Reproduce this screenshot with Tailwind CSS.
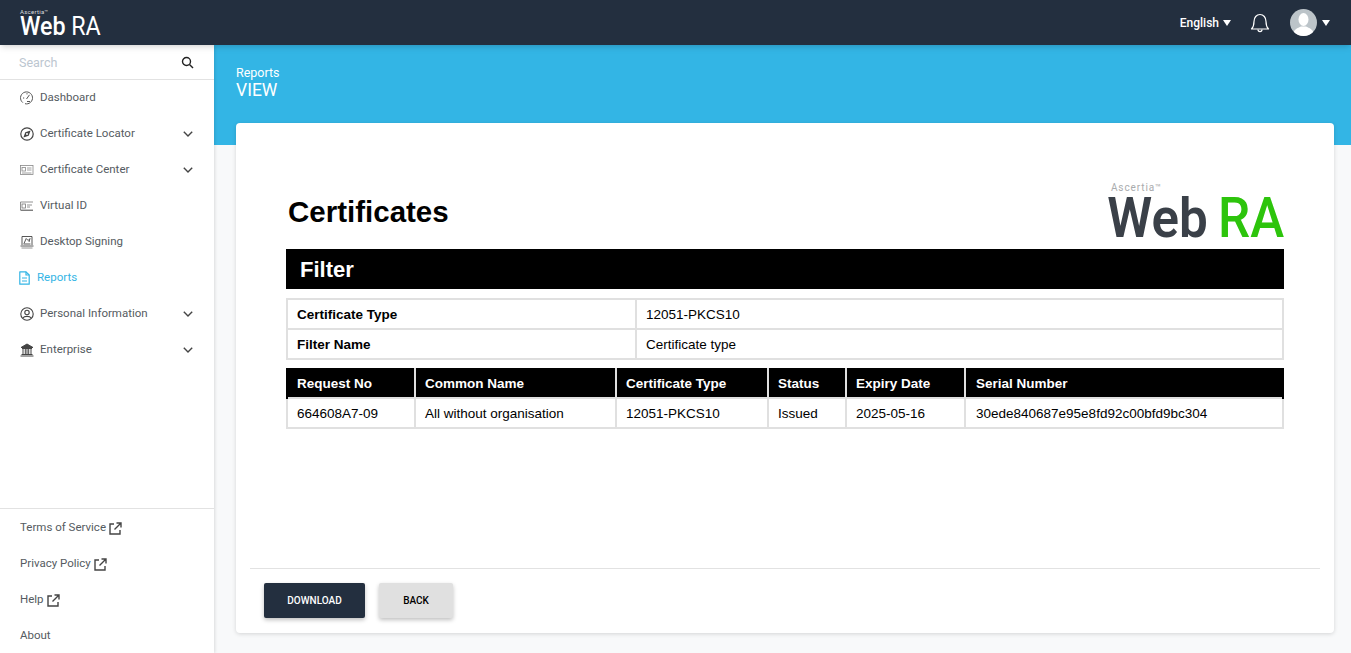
<!DOCTYPE html>
<html lang="en">

<head>
    <meta charset="UTF-8">
    <meta name="viewport" content="width=device-width, initial-scale=1.0">
    <title>Reports - WebRA</title>
    <script src="https://cdn.jsdelivr.net/npm/@tailwindcss/browser@4"></script>
</head>

<body class="h-[653px] w-[1351px] overflow-hidden bg-[#f8f9fa] font-['Roboto',sans-serif]">
    <!-- top bar -->
    <header class="relative z-20 flex h-[45px] items-center justify-between bg-[#232f3f] shadow-md">
        <div class="mt-[-1px] ml-[20px] flex flex-col text-white">
            <span class="text-[6px] leading-[6px] tracking-[0.3px] text-[#d8dadd]">Ascertia™</span>
            <span class="mt-[2px] flex h-[19px] origin-left scale-x-[0.93] text-[25px] leading-[19px] font-medium"><span>Web</span><span class="ml-[6px] font-normal">RA</span></span>
        </div>
        <div class="flex items-center">
            <span class="ml-[1px] text-[12px] font-medium text-white">English</span>
            <span class="ml-[4px] h-0 w-0 border-x-[4px] border-t-[6px] border-x-transparent border-t-white"></span>
            <svg class="ml-[19px]" width="20" height="20" viewBox="0 0 20 20" fill="none" stroke="white" stroke-width="1.2">
                <path d="M1.5 16 C3.5 14 4 12.5 4 8.5 C4 4.5 6.5 1.5 10 1.5 C13.5 1.5 16 4.5 16 8.5 C16 12.5 16.5 14 18.5 16 Z" stroke-linejoin="round" />
                <path d="M8 16.5 C8 19.2 12 19.2 12 16.5" />
            </svg>
            <span class="ml-[20px] h-[27px] w-[27px] overflow-hidden rounded-full bg-[#bcc4c9]">
                <svg width="27" height="27" viewBox="0 0 27 27" fill="white">
                    <ellipse cx="13.5" cy="10.5" rx="5" ry="6.5" />
                    <path d="M3 27 C3 20 8 19 11 17.5 H16 C19 19 24 20 24 27 Z" />
                </svg>
            </span>
            <span class="mr-[21px] ml-[5px] h-0 w-0 border-x-[4px] border-t-[6px] border-x-transparent border-t-white"></span>
        </div>
    </header>

    <div class="flex h-[608px]">
        <!-- sidebar -->
        <aside class="relative z-10 flex w-[214px] shrink-0 flex-col bg-white text-[11.5px] text-[#555b61] shadow-[1px_0_3px_rgba(0,0,0,0.12)]">
            <div class="flex h-[35px] shrink-0 items-center justify-between border-b border-[#e2e2e2] pr-[20px] pl-[19px]">
                <span class="pt-[2px] text-[12.5px] text-[#bcc6d0]">Search</span>
                <svg width="13" height="13" viewBox="0 0 13 13" fill="none" stroke="#222" stroke-width="1.4">
                    <circle cx="5.5" cy="5.5" r="4" />
                    <path d="M8.5 8.5 L12 12" />
                </svg>
            </div>
            <nav class="flex flex-1 flex-col">
                <a class="flex h-[36px] items-center pl-[20px]">
                    <svg class="mr-[6px]" width="14" height="14" viewBox="0 0 14 14" fill="none" stroke="#555" stroke-width="1">
                        <path d="M2.8 11.6 A6 6 0 1 1 5 12.7" />
                        <path d="M6.5 8 L9.5 3.8 M3 7 H4.2 M7 2.2 V3.4 M10 10.5 H7" />
                    </svg>
                    Dashboard
                </a>
                <a class="flex h-[36px] items-center pl-[20px]">
                    <svg class="mr-[6px]" width="14" height="14" viewBox="0 0 14 14" fill="none" stroke="#444" stroke-width="1.2">
                        <circle cx="7" cy="7" r="6.2" />
                        <path fill-rule="evenodd" d="M10.6 3.4 L8.7 8.7 L3.4 10.6 L5.3 5.3 Z M7 6 A1 1 0 1 0 7 8 A1 1 0 1 0 7 6 Z" fill="#444" stroke="none" />
                    </svg>
                    Certificate Locator
                    <svg class="mr-[21px] ml-auto" width="10" height="6" viewBox="0 0 10 6" fill="none" stroke="#444" stroke-width="1.4"><path d="M0.8 0.8 L5 5 L9.2 0.8" /></svg>
                </a>
                <a class="flex h-[36px] items-center pl-[20px]">
                    <svg class="mr-[6px]" width="14" height="14" viewBox="0 0 14 14" fill="none" stroke="#888" stroke-width="0.8">
                        <rect x="0.5" y="2.5" width="12.5" height="9" />
                        <rect x="2" y="4.5" width="3.5" height="3.5" />
                        <path d="M7 5 H11.5 M7 7 H11.5 M2 10 H11.5" />
                    </svg>
                    Certificate Center
                    <svg class="mr-[21px] ml-auto" width="10" height="6" viewBox="0 0 10 6" fill="none" stroke="#444" stroke-width="1.4"><path d="M0.8 0.8 L5 5 L9.2 0.8" /></svg>
                </a>
                <a class="flex h-[36px] items-center pl-[20px]">
                    <svg class="mr-[6px]" width="14" height="14" viewBox="0 0 14 14" fill="none" stroke="#777" stroke-width="0.8">
                        <path d="M0.5 11 V3 H13" />
                        <path d="M0.5 11.2 H13" stroke="#444" stroke-width="1" />
                        <rect x="2" y="5" width="3.5" height="4" />
                        <path d="M7 6 H12 M7 8 H10" />
                    </svg>
                    Virtual ID
                </a>
                <a class="flex h-[36px] items-center pl-[20px]">
                    <svg class="mr-[6px]" width="14" height="14" viewBox="0 0 14 14" fill="none" stroke="#444" stroke-width="0.9">
                        <path d="M2 10 V1.5 H12 V10" />
                        <path d="M0.5 11 H13.5" />
                        <path d="M1.5 13 H12.5" stroke="#888" />
                        <path d="M4 8.5 L6.2 3.5 L8.2 5.5 L10 3.5 L9 7 M3.5 9 H10.5" />
                    </svg>
                    Desktop Signing
                </a>
                <a class="flex h-[36px] items-center pl-[20px] text-[#33b5e5]">
                    <svg class="mr-[7px] ml-[-1px]" width="11" height="14" viewBox="0 0 11 14" fill="none" stroke="#33b5e5" stroke-width="1.2">
                        <path d="M1.5 0.8 H7 L10.2 4 V13.2 H0.8 V0.8 Z" stroke-linejoin="round" />
                        <path d="M7 0.8 V4 H10.2 M3 7 H8 M3 10 H8" />
                    </svg>
                    Reports
                </a>
                <a class="flex h-[36px] items-center pl-[20px]">
                    <svg class="mr-[6px]" width="14" height="14" viewBox="0 0 14 14" fill="none" stroke="#444" stroke-width="1.1">
                        <circle cx="7" cy="7" r="6.2" />
                        <circle cx="7" cy="5.5" r="2.2" />
                        <path d="M3 11 C4 8.8 10 8.8 11 11" />
                    </svg>
                    Personal Information
                    <svg class="mr-[21px] ml-auto" width="10" height="6" viewBox="0 0 10 6" fill="none" stroke="#444" stroke-width="1.4"><path d="M0.8 0.8 L5 5 L9.2 0.8" /></svg>
                </a>
                <a class="flex h-[36px] items-center pl-[20px]">
                    <svg class="mr-[6px]" width="14" height="14" viewBox="0 0 14 14" fill="none" stroke="#444" stroke-width="1">
                        <path d="M1 4.5 L7 1 L13 4.5 Z" fill="#444" />
                        <path d="M2 5.5 H12 M3 6 V11 M5.3 6 V11 M7 6 V11 M8.7 6 V11 M11 6 V11 M1.5 11.5 H12.5 M0.5 13 H13.5" />
                    </svg>
                    Enterprise
                    <svg class="mr-[21px] ml-auto" width="10" height="6" viewBox="0 0 10 6" fill="none" stroke="#444" stroke-width="1.4"><path d="M0.8 0.8 L5 5 L9.2 0.8" /></svg>
                </a>
            </nav>
            <div class="border-t border-[#e2e2e2]">
                <a class="flex h-[36px] items-center pt-[2px] pl-[20px]">
                    Terms of Service
                    <svg class="ml-[3px]" width="13" height="13" viewBox="0 0 13 13" fill="none" stroke="#444" stroke-width="1.4"><path d="M5 2 H1 V12 H11 V8 M7.5 1 H12 V5.5 M12 1 L5.5 7.5" /></svg>
                </a>
                <a class="flex h-[36px] items-center pt-[2px] pl-[20px]">
                    Privacy Policy
                    <svg class="ml-[3px]" width="13" height="13" viewBox="0 0 13 13" fill="none" stroke="#444" stroke-width="1.4"><path d="M5 2 H1 V12 H11 V8 M7.5 1 H12 V5.5 M12 1 L5.5 7.5" /></svg>
                </a>
                <a class="flex h-[36px] items-center pt-[2px] pl-[20px]">
                    Help
                    <svg class="ml-[3px]" width="13" height="13" viewBox="0 0 13 13" fill="none" stroke="#444" stroke-width="1.4"><path d="M5 2 H1 V12 H11 V8 M7.5 1 H12 V5.5 M12 1 L5.5 7.5" /></svg>
                </a>
                <a class="flex h-[36px] items-center pt-[2px] pl-[20px]">About</a>
            </div>
        </aside>

        <!-- main area -->
        <main class="flex min-w-0 flex-1 flex-col">
            <div class="h-[100px] shrink-0 bg-[#33b5e5] pt-[20px] pl-[22px] text-white">
                <p class="text-[12.5px] leading-[15px]">Reports</p>
                <p class="text-[17.5px] leading-[20px]">VIEW</p>
            </div>
            <section class="relative mt-[-22px] mr-[17px] ml-[22px] flex h-[510px] flex-col rounded-[4px] bg-white shadow-[0_1px_4px_rgba(0,0,0,0.15)]">
                <div class="flex-1 px-[50px] pt-[57px] font-['Liberation_Sans',sans-serif] text-black">
                    <div class="flex h-[69px] items-end justify-between">
                        <h1 class="mb-[19px] ml-[2px] text-[29.5px] leading-[36px] font-bold">Certificates</h1>
                        <div class="mb-[11px] flex flex-col font-['Roboto',sans-serif]">
                            <span class="ml-[17px] text-[10px] leading-[11px] tracking-[0.9px] text-[#a9abad]">Ascertia™</span>
                            <span class="mt-[5px] flex h-[40px] origin-right scale-x-[0.93] text-[55px] leading-[40px] font-semibold text-[#3a4048]"><span>Web</span><span class="ml-[11px] font-medium text-[#2dc40c]">RA</span></span>
                        </div>
                    </div>
                    <div class="flex h-[40px] items-center bg-black pl-[14px] text-[22px] font-bold text-white">Filter</div>
                    <table class="mt-[9px] w-full table-fixed border-collapse text-[13.5px]">
                        <tbody>
                            <tr class="h-[30px]">
                                <td class="w-[349px] border-2 border-[#e0e0e0] pt-[3px] pl-[9px] font-bold">Certificate Type</td>
                                <td class="border-2 border-[#e0e0e0] pt-[3px] pl-[9px]">12051-PKCS10</td>
                            </tr>
                            <tr class="h-[30px]">
                                <td class="border-2 border-[#e0e0e0] pt-[3px] pl-[9px] font-bold">Filter Name</td>
                                <td class="border-2 border-[#e0e0e0] pt-[3px] pl-[9px]">Certificate type</td>
                            </tr>
                        </tbody>
                    </table>
                    <table class="mt-[8px] w-full table-fixed border-collapse text-left text-[13.5px]">
                        <thead>
                            <tr class="h-[30px] bg-black text-white">
                                <th class="w-[128px] border-x-2 border-x-[#e0e0e0] border-l-black pt-[3px] pl-[9px] font-bold">Request No</th>
                                <th class="w-[201px] border-x-2 border-x-[#e0e0e0] pt-[3px] pl-[9px] font-bold">Common Name</th>
                                <th class="w-[152px] border-x-2 border-x-[#e0e0e0] pt-[3px] pl-[9px] font-bold">Certificate Type</th>
                                <th class="w-[78px] border-x-2 border-x-[#e0e0e0] pt-[3px] pl-[9px] font-bold">Status</th>
                                <th class="w-[119px] border-x-2 border-x-[#e0e0e0] pt-[3px] pl-[9px] font-bold">Expiry Date</th>
                                <th class="border-x-2 border-x-[#e0e0e0] border-r-black pt-[3px] pl-[10px] font-bold">Serial Number</th>
                            </tr>
                        </thead>
                        <tbody>
                            <tr class="h-[30px]">
                                <td class="border-2 border-[#e0e0e0] pt-[3px] pl-[9px]">664608A7-09</td>
                                <td class="border-2 border-[#e0e0e0] pt-[3px] pl-[9px]">All without organisation</td>
                                <td class="border-2 border-[#e0e0e0] pt-[3px] pl-[9px]">12051-PKCS10</td>
                                <td class="border-2 border-[#e0e0e0] pt-[3px] pl-[9px]">Issued</td>
                                <td class="border-2 border-[#e0e0e0] pt-[3px] pl-[9px]">2025-05-16</td>
                                <td class="border-2 border-[#e0e0e0] pt-[3px] pl-[10px]">30ede840687e95e8fd92c00bfd9bc304</td>
                            </tr>
                        </tbody>
                    </table>
                </div>
                <div class="mx-[14px] flex h-[65px] shrink-0 items-start gap-[14px] border-t border-[#e2e2e2] pt-[14px] pl-[14px] text-[10px] font-medium">
                    <button class="h-[35px] w-[101px] rounded-[2px] bg-[#232f3f] text-white shadow-[0_2px_4px_rgba(0,0,0,0.25)]">DOWNLOAD</button>
                    <button class="h-[35px] w-[74px] rounded-[2px] bg-[#e0e0e0] text-black shadow-[0_2px_4px_rgba(0,0,0,0.25)]">BACK</button>
                </div>
            </section>
        </main>
    </div>
</body>

</html>
